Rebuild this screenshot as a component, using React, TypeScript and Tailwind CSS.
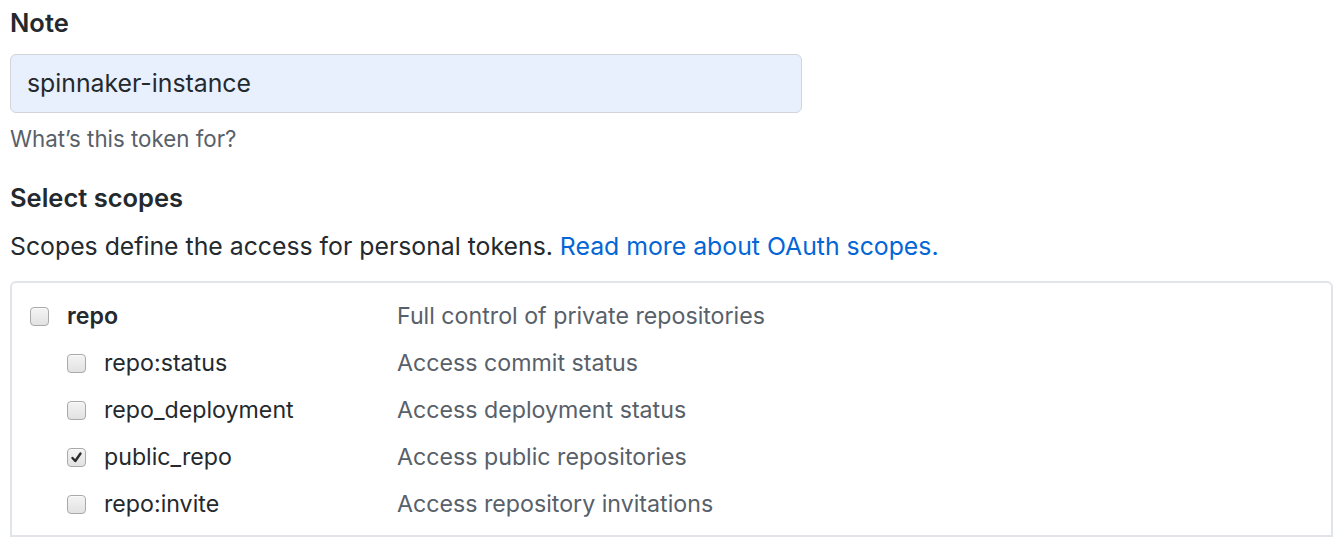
import React from "react";

function Box({ checked }: { checked?: boolean }) {
  return (
    <span className="flex h-[19px] w-[19px] shrink-0 items-center justify-center rounded-[4px] border border-[#a9a9a9] bg-gradient-to-b from-[#f4f4f4] to-[#e2e2e2] shadow-[inset_0_1px_0_rgba(255,255,255,0.6)]">
      {checked && (
        <svg width="13" height="13" viewBox="0 0 13 13">
          <path d="M2.5 7 L5.3 10 L10.5 2.5" fill="none" stroke="#2b2b2b" strokeWidth="2.4" strokeLinecap="round" strokeLinejoin="round" />
        </svg>
      )}
    </span>
  );
}

const rows = [
  { name: "repo:status", desc: "Access commit status" },
  { name: "repo_deployment", desc: "Access deployment status" },
  { name: "public_repo", desc: "Access public repositories", checked: true },
  { name: "repo:invite", desc: "Access repository invitations" },
];

export default function App() {
  return (
    <div
      className="w-[1342px] h-[538px] overflow-hidden bg-white pl-[10px] pr-[9px] text-[#24292e]"
      style={{ fontFamily: "Inter, 'Noto Sans', sans-serif" }}
    >
      <div className="pt-[8px] text-[25.5px] font-semibold leading-[30px]">Note</div>
      <div className="mt-[16px] flex h-[59px] w-[792px] items-center rounded-[6px] border border-[#d1d5da] bg-[#e8f0fe] pl-[16px] text-[24.8px]">
        spinnaker-instance
      </div>
      <div className="mt-[11px] text-[22.3px] leading-[30px] text-[#586069]">What’s this token for?</div>
      <div className="mt-[29px] text-[25.5px] font-semibold leading-[30px]">Select scopes</div>
      <div className="mt-[18px] text-[24.8px] leading-[30px]">
        Scopes define the access for personal tokens.{" "}
        <span className="text-[#0366d6]">Read more about OAuth scopes.</span>
      </div>
      <div className="mt-[20px] h-[256px] rounded-t-[6px] border-2 border-[#e1e4e8] px-[18px] pt-[18px]">
        <div className="flex h-[30px] items-center text-[23.2px]">
          <div className="flex w-[367px] items-center">
            <Box />
            <span className="ml-[18px] font-semibold">repo</span>
          </div>
          <span className="text-[#586069]">Full control of private repositories</span>
        </div>
        {rows.map((r) => (
          <div key={r.name} className="mt-[17px] flex h-[30px] items-center text-[23.2px]">
            <div className="flex w-[367px] items-center pl-[37px]">
              <Box checked={r.checked} />
              <span className="ml-[18px]">{r.name}</span>
            </div>
            <span className="text-[#586069]">{r.desc}</span>
          </div>
        ))}
      </div>
    </div>
  );
}
